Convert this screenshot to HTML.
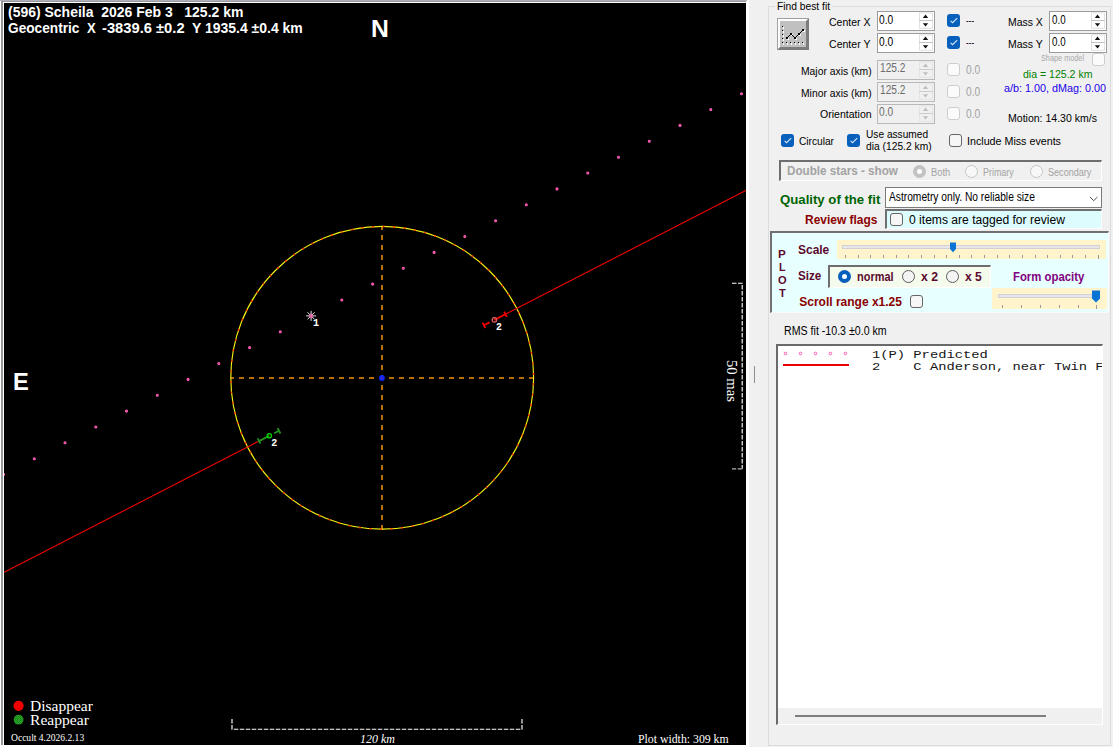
<!DOCTYPE html>
<html lang="en"><head><meta charset="utf-8"><title>Occult - asteroid occultation plot</title>
<style>
html,body{margin:0;padding:0}
body{width:1113px;height:747px;position:relative;overflow:hidden;background:#f0f0f0;font-family:"Liberation Sans",Arial,sans-serif}
div,span,i,svg{position:absolute;box-sizing:border-box}
.t{line-height:0;white-space:pre;transform-origin:0 0}
.sa{font-family:"Liberation Sans",Arial,sans-serif}
.se{font-family:"Liberation Serif","Times New Roman",serif}
.mo{font-family:"Liberation Mono","Courier New",monospace}
#frame{left:0;top:0;width:749px;height:747px;background:#fff}
#frame .top{left:0;top:0;width:747px;height:1px;background:#aeaebc}
#frame .g1{left:1px;top:1px;width:745px;height:1px;background:#989898}
#frame .g2{left:1px;top:1px;width:2px;height:744px;background:#989898}
#plot{left:4px;top:3px;width:742px;height:742px;background:#000;overflow:hidden}
.plotsvg{left:0;top:0}
#plot .t{margin-left:-4px;margin-top:-3px}
#split{left:754px;top:366px;width:1px;height:17px;background:#8c8c8c}
#grp{left:768px;top:6px;width:343px;height:740px;border:1px solid #dcdcdc}
#grpcap{left:775px;top:2px;width:57px;height:12px;background:#f0f0f0}
.spin{width:58px;height:20px;background:#fff;border:1px solid #9c9c9c}
.spin.dis{background:#f0f0f0;border-color:#b9b9b9}
.spin .sb{right:1px;top:0px;width:14px;height:17px}
.spin.dis .sb{opacity:.8}
.cb{width:13px;height:13px;border-radius:3px}
.cb.on{background:#0760bc}
.cb.off{background:#f6f6f6;border:1px solid #666}
.cb.dis{background:#fbfbfb;border:1px solid #cdcdcd}
.rb{width:13px;height:13px;border-radius:50%}
.rb.on{background:#fff;border:4px solid #0760bc}
.rb.off{background:#f4f4f4;border:1px solid #5c5c5c}
.rb.dis{background:#f8f8f8;border:1px solid #c6c6c6}
.rb.dison{background:#fff;border:4px solid #c2c2c2}
.sunk{border-style:solid;border-width:2px 1px 1px 2px;border-color:#6e6e6e #fff #fff #6e6e6e}
#btn{left:777px;top:18px;width:32px;height:32px;background:#c0c0c0;border-style:solid;border-width:3px;border-color:#fff #7c7c7c #7c7c7c #fff;outline:0}
#btn:before{content:"";position:absolute;left:-3px;top:-3px;width:31px;height:31px;border-left:1px solid #a0a0a0;border-top:1px solid #a0a0a0}
.tk{width:1px;background:#9a9a9a}
.track{height:4px;background:#e7e7ea;border:1px solid #d0d0d6}
</style></head><body>
<div id="frame"><div class="top"></div><div class="g1"></div><div class="g2"></div>
<div id="plot">
<svg class="plotsvg" width="742" height="742" viewBox="4 3 742 742">
<g fill="#a83480" stroke="#ff5cb6" stroke-width="1.1">
<circle cx="3.5" cy="474.6" r="1.0"/>
<circle cx="34.3" cy="458.7" r="1.0"/>
<circle cx="65.0" cy="442.8" r="1.0"/>
<circle cx="95.8" cy="427.0" r="1.0"/>
<circle cx="126.5" cy="411.1" r="1.0"/>
<circle cx="157.3" cy="395.2" r="1.0"/>
<circle cx="188.1" cy="379.4" r="1.0"/>
<circle cx="218.8" cy="363.5" r="1.0"/>
<circle cx="249.6" cy="347.6" r="1.0"/>
<circle cx="280.3" cy="331.7" r="1.0"/>
<circle cx="341.8" cy="300.0" r="1.0"/>
<circle cx="372.6" cy="284.1" r="1.0"/>
<circle cx="403.3" cy="268.3" r="1.0"/>
<circle cx="434.1" cy="252.4" r="1.0"/>
<circle cx="464.8" cy="236.5" r="1.0"/>
<circle cx="495.6" cy="220.7" r="1.0"/>
<circle cx="526.3" cy="204.8" r="1.0"/>
<circle cx="557.0" cy="188.9" r="1.0"/>
<circle cx="587.8" cy="173.0" r="1.0"/>
<circle cx="618.5" cy="157.2" r="1.0"/>
<circle cx="649.3" cy="141.3" r="1.0"/>
<circle cx="680.0" cy="125.4" r="1.0"/>
<circle cx="710.8" cy="109.6" r="1.0"/>
<circle cx="741.5" cy="93.7" r="1.0"/>
</g>
<g stroke="#efe4ea" stroke-width="1">
<line x1="306.1" y1="315.9" x2="316.1" y2="315.9"/>
<line x1="307.5" y1="312.3" x2="314.6" y2="319.4"/>
<line x1="311.1" y1="310.9" x2="311.1" y2="320.9"/>
<line x1="314.6" y1="312.3" x2="307.5" y2="319.4"/>
</g>
<circle cx="311.1" cy="315.9" r="1.8" fill="#f060b0"/>
<g stroke="#b47008" stroke-width="2" stroke-dasharray="5 5">
<line x1="534" y1="378.0" x2="231" y2="378.0"/>
<line x1="382.0" y1="530" x2="382.0" y2="227"/>
</g>
<circle cx="382.2" cy="377.8" r="151.4" fill="none" stroke="#f2f010" stroke-width="1.15"/>
<circle cx="382.2" cy="377.8" r="151.4" fill="none" stroke="#ff2800" stroke-width="1.5" stroke-dasharray="1.8 8.7697" stroke-dashoffset="-5.44"/>
<g stroke="#f00000" stroke-width="1.1">
<line x1="0" y1="574.5" x2="269.3" y2="435.8"/>
<line x1="494.4" y1="319.9" x2="750" y2="188.3"/>
</g>
<g stroke="#f00000" stroke-width="1.8" fill="none">
<line x1="482.5" y1="322.6" x2="485.3" y2="328.0"/>
<line x1="504.1" y1="311.6" x2="506.8" y2="316.9"/>
<line x1="483.9" y1="325.3" x2="489.5" y2="322.4"/>
<line x1="494.4" y1="319.9" x2="505.4" y2="314.2"/>
</g>
<circle cx="494.4" cy="319.9" r="2.2" fill="none" stroke="#e86060" stroke-width="1.15"/>
<g stroke="#1d961d" stroke-width="1.8" fill="none">
<line x1="257.7" y1="438.4" x2="260.4" y2="443.7"/>
<line x1="277.6" y1="428.1" x2="280.4" y2="433.5"/>
<line x1="259.1" y1="441.1" x2="269.3" y2="435.8"/>
<line x1="274.2" y1="433.3" x2="279.0" y2="430.8"/>
</g>
<circle cx="269.3" cy="435.8" r="2.2" fill="none" stroke="#00d800" stroke-width="1.25"/>
<circle cx="381.9" cy="378" r="2.9" fill="#0828ff"/><circle cx="381.9" cy="378" r="0.8" fill="#a02060"/>
<g fill="none" stroke="#ffffff" stroke-width="1.15" stroke-dasharray="4.5 1.5">
<polyline points="232,719 232,729.2 522,729.2 522,719"/>
<polyline points="732,283.2 742.2,283.2 742.2,468.8"/>
</g>
<polyline points="742.2,468.8 732,468.8" fill="none" stroke="#b0b0b0" stroke-width="1.15" stroke-dasharray="4.5 1.5"/>
<defs><pattern id="hatch" width="2" height="2" patternUnits="userSpaceOnUse"><rect width="2" height="2" fill="#2ea02e"/><rect width="1" height="1" fill="#168a16"/><rect x="1" y="1" width="1" height="1" fill="#168a16"/></pattern></defs>
<circle cx="18.6" cy="705.8" r="5.1" fill="#f00000"/>
<circle cx="18.6" cy="719.7" r="4.9" fill="url(#hatch)"/>
<text transform="translate(727.0,359.9) rotate(90)" font-family='"Liberation Serif","Times New Roman",serif' font-size="15" fill="#fff" textLength="42.2" lengthAdjust="spacingAndGlyphs">50 mas</text>
</svg>
</div></div>
<div id="split"></div>
<div id="grp"></div><div id="grpcap"></div>
<div id="btn"><svg width="26" height="26" viewBox="780 21 26 26" style="left:0;top:0" shape-rendering="crispEdges">
<rect x="782.5" y="27" width="1.5" height="1.5" fill="#fff"/><rect x="782" y="26" width="1.4" height="1.4" fill="#000"/>
<rect x="782.5" y="31" width="1.5" height="1.5" fill="#fff"/><rect x="782" y="30" width="1.4" height="1.4" fill="#000"/>
<rect x="782.5" y="35" width="1.5" height="1.5" fill="#fff"/><rect x="782" y="34" width="1.4" height="1.4" fill="#000"/>
<rect x="782.5" y="39" width="1.5" height="1.5" fill="#fff"/><rect x="782" y="38" width="1.4" height="1.4" fill="#000"/>
<rect x="782.5" y="43" width="1.5" height="1.5" fill="#fff"/><rect x="782" y="42" width="1.4" height="1.4" fill="#000"/>
<rect x="786.5" y="43" width="1.5" height="1.5" fill="#fff"/><rect x="786" y="42" width="1.4" height="1.4" fill="#000"/>
<rect x="790.5" y="43" width="1.5" height="1.5" fill="#fff"/><rect x="790" y="42" width="1.4" height="1.4" fill="#000"/>
<rect x="794.5" y="43" width="1.5" height="1.5" fill="#fff"/><rect x="794" y="42" width="1.4" height="1.4" fill="#000"/>
<rect x="798.5" y="43" width="1.5" height="1.5" fill="#fff"/><rect x="798" y="42" width="1.4" height="1.4" fill="#000"/>
<rect x="802.5" y="43" width="1.5" height="1.5" fill="#fff"/><rect x="802" y="42" width="1.4" height="1.4" fill="#000"/>
<rect x="787" y="38" width="2" height="2" fill="#fff"/>
<rect x="791" y="34" width="2" height="2" fill="#fff"/>
<rect x="795" y="38" width="2" height="2" fill="#fff"/>
<rect x="799" y="34" width="2" height="2" fill="#fff"/>
<rect x="803" y="30" width="2" height="2" fill="#fff"/>
<polyline shape-rendering="auto" points="787,38 791,34 795,38 799,34 803,30" fill="none" stroke="#000" stroke-width="1"/>
<rect x="786" y="37" width="2" height="2" fill="#000"/>
<rect x="790" y="33" width="2" height="2" fill="#000"/>
<rect x="794" y="37" width="2" height="2" fill="#000"/>
<rect x="798" y="33" width="2" height="2" fill="#000"/>
<rect x="802" y="29" width="2" height="2" fill="#000"/>
</svg></div>
<div class="spin" style="left:877px;top:11px"><div class="sb"><svg width="14" height="17" viewBox="0 0 14 17"><rect x="0.5" y="0.9" width="13" height="15.4" fill="none" stroke="#e2e2e2"/><line x1="0" y1="8.5" x2="14" y2="8.5" stroke="#c4c4c4"/><path d="M3.8 6.1 L6.5 2.6 L9.2 6.1 Z M3.8 11.2 L9.2 11.2 L6.5 14.6 Z" fill="#111"/></svg></div></div>
<div class="spin" style="left:877px;top:33px"><div class="sb"><svg width="14" height="17" viewBox="0 0 14 17"><rect x="0.5" y="0.9" width="13" height="15.4" fill="none" stroke="#e2e2e2"/><line x1="0" y1="8.5" x2="14" y2="8.5" stroke="#c4c4c4"/><path d="M3.8 6.1 L6.5 2.6 L9.2 6.1 Z M3.8 11.2 L9.2 11.2 L6.5 14.6 Z" fill="#111"/></svg></div></div>
<div class="spin dis" style="left:877px;top:60px"><div class="sb"><svg width="14" height="17" viewBox="0 0 14 17"><rect x="0.5" y="0.9" width="13" height="15.4" fill="none" stroke="#e2e2e2"/><line x1="0" y1="8.5" x2="14" y2="8.5" stroke="#c4c4c4"/><path d="M3.8 6.1 L6.5 2.6 L9.2 6.1 Z M3.8 11.2 L9.2 11.2 L6.5 14.6 Z" fill="#b4b4b4"/></svg></div></div>
<div class="spin dis" style="left:877px;top:82px"><div class="sb"><svg width="14" height="17" viewBox="0 0 14 17"><rect x="0.5" y="0.9" width="13" height="15.4" fill="none" stroke="#e2e2e2"/><line x1="0" y1="8.5" x2="14" y2="8.5" stroke="#c4c4c4"/><path d="M3.8 6.1 L6.5 2.6 L9.2 6.1 Z M3.8 11.2 L9.2 11.2 L6.5 14.6 Z" fill="#b4b4b4"/></svg></div></div>
<div class="spin dis" style="left:877px;top:104px"><div class="sb"><svg width="14" height="17" viewBox="0 0 14 17"><rect x="0.5" y="0.9" width="13" height="15.4" fill="none" stroke="#e2e2e2"/><line x1="0" y1="8.5" x2="14" y2="8.5" stroke="#c4c4c4"/><path d="M3.8 6.1 L6.5 2.6 L9.2 6.1 Z M3.8 11.2 L9.2 11.2 L6.5 14.6 Z" fill="#b4b4b4"/></svg></div></div>
<div class="spin" style="left:1049px;top:11px"><div class="sb"><svg width="14" height="17" viewBox="0 0 14 17"><rect x="0.5" y="0.9" width="13" height="15.4" fill="none" stroke="#e2e2e2"/><line x1="0" y1="8.5" x2="14" y2="8.5" stroke="#c4c4c4"/><path d="M3.8 6.1 L6.5 2.6 L9.2 6.1 Z M3.8 11.2 L9.2 11.2 L6.5 14.6 Z" fill="#111"/></svg></div></div>
<div class="spin" style="left:1049px;top:33px"><div class="sb"><svg width="14" height="17" viewBox="0 0 14 17"><rect x="0.5" y="0.9" width="13" height="15.4" fill="none" stroke="#e2e2e2"/><line x1="0" y1="8.5" x2="14" y2="8.5" stroke="#c4c4c4"/><path d="M3.8 6.1 L6.5 2.6 L9.2 6.1 Z M3.8 11.2 L9.2 11.2 L6.5 14.6 Z" fill="#111"/></svg></div></div>
<div class="cb on" style="left:947px;top:14px"><svg width="13" height="13" viewBox="0 0 13 13"><path d="M3.6 6.9 L5.6 8.7 L10.2 4.1" fill="none" stroke="#d6e6f6" stroke-width="1.1"/></svg></div>
<div class="cb on" style="left:947px;top:36px"><svg width="13" height="13" viewBox="0 0 13 13"><path d="M3.6 6.9 L5.6 8.7 L10.2 4.1" fill="none" stroke="#d6e6f6" stroke-width="1.1"/></svg></div>
<div class="cb dis" style="left:947px;top:63px"></div>
<div class="cb dis" style="left:947px;top:85px"></div>
<div class="cb dis" style="left:947px;top:107px"></div>
<div class="cb dis" style="left:1092px;top:53px"></div>
<div class="cb on" style="left:781px;top:134px"><svg width="13" height="13" viewBox="0 0 13 13"><path d="M3.6 6.9 L5.6 8.7 L10.2 4.1" fill="none" stroke="#d6e6f6" stroke-width="1.1"/></svg></div>
<div class="cb on" style="left:847px;top:134px"><svg width="13" height="13" viewBox="0 0 13 13"><path d="M3.6 6.9 L5.6 8.7 L10.2 4.1" fill="none" stroke="#d6e6f6" stroke-width="1.1"/></svg></div>
<div class="cb off" style="left:949px;top:134px"></div>
<div class="sunk" style="left:779px;top:160px;width:323px;height:21px"></div>
<div class="rb dison" style="left:912.5px;top:165.0px"></div>
<div class="rb dis" style="left:964.5px;top:165.0px"></div>
<div class="rb dis" style="left:1030.0px;top:165.0px"></div>
<div style="left:885px;top:187px;width:217px;height:21px;background:#fff;border:1px solid #7a7a7a"><svg width="10" height="6" style="left:202.6px;top:8.2px" viewBox="0 0 10 6"><path d="M1 1 L4.7 4.7 L8.4 1" fill="none" stroke="#505050" stroke-width="1"/></svg></div>
<div class="sunk" style="left:885px;top:209px;width:217px;height:20px;background:#dcfcfe"></div>
<div class="cb off" style="left:890px;top:213px"></div>
<div class="sunk" style="left:770px;top:231px;width:339px;height:82px;background:#e8ffff;border-width:2px 1px 1px 2px;border-color:#707070 #fafafa #fafafa #707070"></div>
<div style="left:837px;top:240px;width:269px;height:19px;background:#fff4cc"></div>
<div class="track" style="left:842px;top:245px;width:258px"></div>
<i class="tk" style="left:845.2px;top:255px;height:3px"></i><i class="tk" style="left:857.8px;top:255px;height:3px"></i><i class="tk" style="left:870.4px;top:255px;height:3px"></i><i class="tk" style="left:883.1px;top:255px;height:3px"></i><i class="tk" style="left:895.7px;top:255px;height:3px"></i><i class="tk" style="left:908.3px;top:255px;height:3px"></i><i class="tk" style="left:920.9px;top:255px;height:3px"></i><i class="tk" style="left:933.5px;top:255px;height:3px"></i><i class="tk" style="left:946.2px;top:255px;height:3px"></i><i class="tk" style="left:958.8px;top:255px;height:3px"></i><i class="tk" style="left:971.4px;top:255px;height:3px"></i><i class="tk" style="left:984.0px;top:255px;height:3px"></i><i class="tk" style="left:996.6px;top:255px;height:3px"></i><i class="tk" style="left:1009.3px;top:255px;height:3px"></i><i class="tk" style="left:1021.9px;top:255px;height:3px"></i><i class="tk" style="left:1034.5px;top:255px;height:3px"></i><i class="tk" style="left:1047.1px;top:255px;height:3px"></i><i class="tk" style="left:1059.7px;top:255px;height:3px"></i><i class="tk" style="left:1072.4px;top:255px;height:3px"></i><i class="tk" style="left:1085.0px;top:255px;height:3px"></i><i class="tk" style="left:1097.6px;top:255px;height:4px"></i>
<svg width="8" height="11" style="left:949px;top:242px" viewBox="0 0 8 11"><path d="M1 0.5 H7 V7 L4 10.3 L1 7 Z" fill="#0a74d4"/></svg>
<div class="sunk" style="left:828px;top:265px;width:163px;height:23px;background:#f4fbec;border-color:#6e6e6e #fff #fff #6e6e6e"></div>
<div class="rb on" style="left:837.7px;top:269.7px"></div>
<div class="rb off" style="left:902.0px;top:269.7px"></div>
<div class="rb off" style="left:945.9px;top:269.7px"></div>
<div style="left:992px;top:288px;width:115px;height:21px;background:#fff4cc"></div>
<div class="track" style="left:998px;top:294px;width:102px"></div>
<i class="tk" style="left:1002.3px;top:305px;height:3px"></i><i class="tk" style="left:1021.1px;top:305px;height:3px"></i><i class="tk" style="left:1039.9px;top:305px;height:3px"></i><i class="tk" style="left:1058.7px;top:305px;height:3px"></i><i class="tk" style="left:1077.5px;top:305px;height:3px"></i><i class="tk" style="left:1096.3px;top:305px;height:4px"></i>
<svg width="10" height="13" style="left:1091px;top:290px" viewBox="0 0 10 13"><path d="M1 0.5 H9 V8.5 L5 12.5 L1 8.5 Z" fill="#0a74d4"/></svg>
<div class="cb off" style="left:910px;top:295px"></div>
<div id="list" style="left:776px;top:344px;width:327px;height:381px;background:#fff;border-style:solid;border-width:2px 1px 1px 2px;border-color:#6a6a6a #fff #fff #6a6a6a;overflow:hidden">
<div style="left:0;top:362px;width:324px;height:16px;background:#f0f0f0"></div>
<div style="left:17px;top:369px;width:251px;height:2px;background:#7e7e7e"></div>
<svg width="80" height="30" style="left:0;top:0" viewBox="778 346 80 30"><g fill="none" stroke="#ff58b4" stroke-width="1">
<circle cx="785.5" cy="353.5" r="1.3"/>
<circle cx="800.5" cy="353.5" r="1.3"/>
<circle cx="815.5" cy="353.5" r="1.3"/>
<circle cx="830.4" cy="353.5" r="1.3"/>
<circle cx="845.4" cy="353.5" r="1.3"/>
</g><rect x="783" y="364" width="66" height="2" fill="#e80000"/></svg>
<span class="t mo" style="left:93.6px;top:9px;font-size:11px;transform:scaleX(1.2527);color:#141414">1(P) Predicted</span>
<span class="t mo" style="left:93.6px;top:21px;font-size:11px;transform:scaleX(1.2527);color:#141414">2    C Anderson, near Twin F</span>
</div>
<span class="t sa" style="left:7.60px;top:12px;font-size:14px;color:#ffffff;transform:scaleX(0.9981);font-weight:bold">(596) Scheila  2026 Feb 3   125.2 km</span>
<span class="t sa" style="left:7.66px;top:28px;font-size:14px;color:#ffffff;transform:scaleX(0.9772);font-weight:bold">Geocentric</span>
<span class="t sa" style="left:86.52px;top:28px;font-size:14px;color:#ffffff;transform:scaleX(0.9333);font-weight:bold">X</span>
<span class="t sa" style="left:102.32px;top:28px;font-size:14px;color:#ffffff;transform:scaleX(1.0516);font-weight:bold">-3839.6 ±0.2</span>
<span class="t sa" style="left:191.70px;top:28px;font-size:14px;color:#ffffff;transform:scaleX(0.9986);font-weight:bold">Y 1935.4 ±0.4 km</span>
<span class="t sa" style="left:371.34px;top:29px;font-size:23px;color:#ffffff;transform:scaleX(1.0741);font-weight:bold">N</span>
<span class="t sa" style="left:12.70px;top:382px;font-size:23px;color:#ffffff;transform:scaleX(1.0308);font-weight:bold">E</span>
<span class="t se" style="left:29.73px;top:706px;font-size:15px;color:#ffffff;transform:scaleX(1.0340)">Disappear</span>
<span class="t se" style="left:29.73px;top:720px;font-size:15px;color:#ffffff;transform:scaleX(1.0393)">Reappear</span>
<span class="t se" style="left:10.87px;top:738px;font-size:10px;color:#ffffff;transform:scaleX(0.9545)">Occult 4.2026.2.13</span>
<span class="t se" style="left:360.05px;top:739px;font-size:12px;color:#ffffff;transform:scaleX(0.9941);font-style:italic">120 km</span>
<span class="t se" style="left:637.92px;top:739px;font-size:13px;color:#ffffff;transform:scaleX(0.9063)">Plot width: 309 km</span>
<span class="t mo" style="left:312.79px;top:324px;font-size:10px;color:#ffffff;transform:scaleX(1.0200);font-weight:bold">1</span>
<span class="t mo" style="left:496.26px;top:328px;font-size:10px;color:#ffffff;transform:scaleX(0.9800);font-weight:bold">2</span>
<span class="t mo" style="left:271.15px;top:444px;font-size:10px;color:#ffffff;transform:scaleX(1.0000);font-weight:bold">2</span>
<span class="t sa" style="left:776.72px;top:6px;font-size:11px;color:#000000;transform:scaleX(0.9327)">Find best fit</span>
<span class="t sa" style="left:829.37px;top:22px;font-size:11px;color:#000000;transform:scaleX(0.9544)">Center X</span>
<span class="t sa" style="left:829.37px;top:44px;font-size:11px;color:#000000;transform:scaleX(0.9600)">Center Y</span>
<span class="t sa" style="left:800.61px;top:71px;font-size:11px;color:#000000;transform:scaleX(0.9401)">Major axis (km)</span>
<span class="t sa" style="left:800.61px;top:93px;font-size:11px;color:#000000;transform:scaleX(0.9401)">Minor axis (km)</span>
<span class="t sa" style="left:819.57px;top:114px;font-size:11px;color:#000000;transform:scaleX(0.9592)">Orientation</span>
<span class="t sa" style="left:879.32px;top:20px;font-size:12px;color:#000000;transform:scaleX(0.8508)">0.0</span>
<span class="t sa" style="left:879.32px;top:42px;font-size:12px;color:#000000;transform:scaleX(0.8508)">0.0</span>
<span class="t sa" style="left:880.00px;top:68px;font-size:12px;color:#6d6d6d;transform:scaleX(0.8456)">125.2</span>
<span class="t sa" style="left:880.00px;top:90px;font-size:12px;color:#6d6d6d;transform:scaleX(0.8456)">125.2</span>
<span class="t sa" style="left:879.32px;top:112px;font-size:12px;color:#6d6d6d;transform:scaleX(0.8508)">0.0</span>
<span class="t sa" style="left:966.38px;top:20px;font-size:11px;color:#000000;transform:scaleX(0.7400)">---</span>
<span class="t sa" style="left:966.38px;top:42px;font-size:11px;color:#000000;transform:scaleX(0.7400)">---</span>
<span class="t sa" style="left:1008.00px;top:22px;font-size:11px;color:#000000;transform:scaleX(0.9493)">Mass X</span>
<span class="t sa" style="left:1007.99px;top:44px;font-size:11px;color:#000000;transform:scaleX(0.9560)">Mass Y</span>
<span class="t sa" style="left:1051.84px;top:20px;font-size:12px;color:#000000;transform:scaleX(0.8127)">0.0</span>
<span class="t sa" style="left:1051.84px;top:42px;font-size:12px;color:#000000;transform:scaleX(0.8127)">0.0</span>
<span class="t sa" style="left:1041.42px;top:58px;font-size:8.5px;color:#a8a8a8;transform:scaleX(0.8592)">Shape model</span>
<span class="t sa" style="left:966.12px;top:70px;font-size:12px;color:#a0a0a0;transform:scaleX(0.8508)">0.0</span>
<span class="t sa" style="left:966.12px;top:92px;font-size:12px;color:#a0a0a0;transform:scaleX(0.8508)">0.0</span>
<span class="t sa" style="left:966.12px;top:114px;font-size:12px;color:#a0a0a0;transform:scaleX(0.8508)">0.0</span>
<span class="t sa" style="left:1022.87px;top:74px;font-size:11px;color:#008000;transform:scaleX(0.9586)">dia = 125.2 km</span>
<span class="t sa" style="left:1004.16px;top:88px;font-size:11px;color:#1c00e8;transform:scaleX(0.9806)">a/b: 1.00, dMag: 0.00</span>
<span class="t sa" style="left:1007.99px;top:118px;font-size:11px;color:#000000;transform:scaleX(0.9574)">Motion: 14.30 km/s</span>
<span class="t sa" style="left:799.49px;top:141px;font-size:11px;color:#000000;transform:scaleX(0.9235)">Circular</span>
<span class="t sa" style="left:866.19px;top:135px;font-size:10px;color:#000000;transform:scaleX(1.0159)">Use assumed</span>
<span class="t sa" style="left:866.44px;top:147px;font-size:10px;color:#000000;transform:scaleX(1.0263)">dia (125.2 km)</span>
<span class="t sa" style="left:967.42px;top:141px;font-size:11.5px;color:#000000;transform:scaleX(0.9303)">Include Miss events</span>
<span class="t sa" style="left:787.12px;top:171px;font-size:12px;color:#a3a3a3;transform:scaleX(0.9722);font-weight:bold">Double stars - show</span>
<span class="t sa" style="left:930.65px;top:173px;font-size:10px;color:#a3a3a3;transform:scaleX(0.9351)">Both</span>
<span class="t sa" style="left:983.08px;top:173px;font-size:10px;color:#a3a3a3;transform:scaleX(0.8919)">Primary</span>
<span class="t sa" style="left:1048.30px;top:173px;font-size:10px;color:#a3a3a3;transform:scaleX(0.9079)">Secondary</span>
<span class="t sa" style="left:779.54px;top:200px;font-size:13px;color:#006400;transform:scaleX(1.0137);font-weight:bold">Quality of the fit</span>
<span class="t sa" style="left:889.35px;top:197px;font-size:12px;color:#000000;transform:scaleX(0.8521)">Astrometry only. No reliable size</span>
<span class="t sa" style="left:805.26px;top:220px;font-size:13px;color:#8b0000;transform:scaleX(0.9200);font-weight:bold">Review flags</span>
<span class="t sa" style="left:909.27px;top:220px;font-size:12.5px;color:#000000;transform:scaleX(0.9673)">0 items are tagged for review</span>
<span class="t sa" style="left:777.99px;top:254px;font-size:11.5px;color:#5c0a2e;transform:scaleX(1.0154);font-weight:bold">P</span>
<span class="t sa" style="left:778.55px;top:267px;font-size:11.5px;color:#5c0a2e;transform:scaleX(0.9333);font-weight:bold">L</span>
<span class="t sa" style="left:777.87px;top:280px;font-size:11.5px;color:#5c0a2e;transform:scaleX(0.9625);font-weight:bold">O</span>
<span class="t sa" style="left:778.75px;top:293px;font-size:11.5px;color:#5c0a2e;transform:scaleX(0.9714);font-weight:bold">T</span>
<span class="t sa" style="left:798.45px;top:250px;font-size:12px;color:#5c0a2e;transform:scaleX(0.9967);font-weight:bold">Scale</span>
<span class="t sa" style="left:798.47px;top:276px;font-size:12px;color:#5c0a2e;transform:scaleX(0.9696);font-weight:bold">Size</span>
<span class="t sa" style="left:856.56px;top:277px;font-size:12px;color:#5c0a2e;transform:scaleX(0.9143);font-weight:bold">normal</span>
<span class="t sa" style="left:920.69px;top:277px;font-size:12px;color:#5c0a2e;transform:scaleX(1.0250);font-weight:bold">x 2</span>
<span class="t sa" style="left:965.00px;top:277px;font-size:12px;color:#5c0a2e;transform:scaleX(1.0092);font-weight:bold">x 5</span>
<span class="t sa" style="left:1013.14px;top:277px;font-size:12px;color:#800080;transform:scaleX(0.9463);font-weight:bold">Form opacity</span>
<span class="t sa" style="left:799.25px;top:302px;font-size:12px;color:#8b0000;transform:scaleX(1.0000);font-weight:bold">Scroll range x1.25</span>
<span class="t sa" style="left:783.86px;top:331px;font-size:12px;color:#000000;transform:scaleX(0.8858)">RMS fit -10.3 ±0.0 km</span>
</body></html>
